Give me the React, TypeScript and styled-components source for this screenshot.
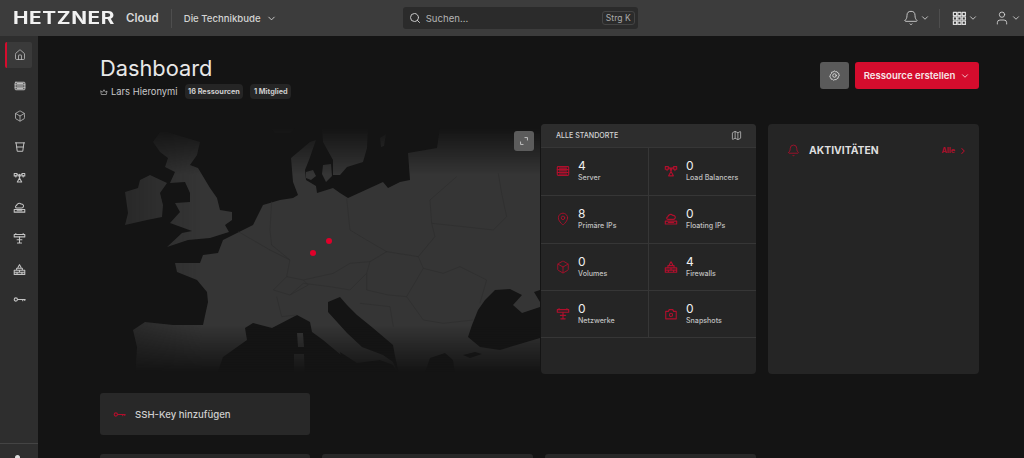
import * as React from "react";
import styled, { createGlobalStyle } from "styled-components";
import {
  Bell,
  Box,
  ChevronDown,
  ChevronRight,
  House,
  MapPin,
  Search,
  User,
  Map as MapIcon,
} from "lucide-react";

const Global = createGlobalStyle`
  html, body {
    margin: 0;
    height: 100%;
    background: #141414;
    overflow: hidden;
    font-family: Inter, "Liberation Sans", sans-serif;
  }
  * { box-sizing: border-box; }
`;

const Page = styled.div`
  width: 1024px;
  height: 458px;
  overflow: hidden;
  display: flex;
  flex-direction: column;
  color: #e6e6e6;
`;

const TopBar = styled.header`
  height: 36px;
  flex: none;
  display: flex;
  align-items: center;
  background: #3c3c3c;
  padding-left: 13px;
`;

const Logo = styled.span`
  width: 105px;
  font-size: 17px;
  font-weight: 700;
  letter-spacing: 0.5px;
  color: #f2f2f2;
  white-space: nowrap;
  transform: scaleX(1.22);
  transform-origin: left center;
`;

const LogoSub = styled.span`
  margin-left: 8px;
  font-size: 11.5px;
  font-weight: 600;
  color: #d8d8d8;
`;

const VLine = styled.div<{ $left?: number; $right?: number }>`
  width: 1px;
  height: 19px;
  background: #4e4e4e;
  margin-left: ${(p) => p.$left ?? 0}px;
  margin-right: ${(p) => p.$right ?? 0}px;
`;

const ProjectSwitch = styled.div`
  display: flex;
  align-items: center;
  gap: 5px;
  margin-left: 12px;
  margin-right: 123px;
  width: 96px;
  font-size: 9.6px;
  font-weight: 500;
  color: #d4d4d4;
  white-space: nowrap;
  svg { flex: none; }
`;

const SearchBox = styled.div`
  width: 235px;
  height: 22px;
  display: flex;
  align-items: center;
  padding: 0 3px 0 6px;
  background: #2b2b2b;
  border-radius: 3px;
  font-size: 9.6px;
  color: #b4b4b4;
  svg { margin-right: 5px; color: #c8c8c8; }
`;

const Keys = styled.kbd`
  margin-left: auto;
  font-family: inherit;
  font-size: 8.6px;
  color: #aaa;
  padding: 1px 3px;
  border: 1px solid #444;
  border-radius: 3px;
`;

const TopActions = styled.div`
  margin-left: auto;
  display: flex;
  align-items: center;
  padding-right: 3px;
`;

const TopAction = styled.div<{ $gap: number }>`
  display: flex;
  align-items: center;
  gap: 1px;
  margin-right: ${(p) => p.$gap}px;
  color: #dcdcdc;
`;

const Body = styled.div`
  flex: 1;
  display: flex;
  min-height: 0;
`;

const SideBar = styled.nav`
  width: 38px;
  flex: none;
  background: #2e2e2e;
  display: flex;
  flex-direction: column;
  gap: 4.6px;
  padding: 6px 6px 0 5px;
`;

const SideItem = styled.div<{ $active?: boolean }>`
  height: 26px;
  display: flex;
  align-items: center;
  justify-content: center;
  color: #c4c4c4;
  background: ${(p) => (p.$active ? "#3a3a3a" : "transparent")};
  border-left: 2px solid ${(p) => (p.$active ? "#d50c2d" : "transparent")};
  border-radius: 2px;
`;

const SideFoot = styled.div`
  margin: auto -6px 0 -5px;
  height: 15px;
  border-top: 1px solid #444;
  display: flex;
  justify-content: center;
  padding-top: 11px;
  &::after {
    content: "";
    width: 5px;
    height: 5px;
    border-radius: 50%;
    background: #ddd;
    margin-left: -4px;
  }
`;

const Main = styled.main`
  flex: 1;
  min-width: 0;
  padding: 19px 45px 0 62px;
`;

const TitleRow = styled.div`
  display: flex;
  justify-content: space-between;
  align-items: flex-start;
  height: 69px;
`;

const Title = styled.h1`
  margin: 0;
  font-size: 21.8px;
  line-height: 26px;
  font-weight: 400;
  color: #e8e8e8;
`;

const Owner = styled.div`
  display: flex;
  align-items: center;
  margin-top: 3px;
  font-size: 9.4px;
  color: #c8c8c8;
  svg { margin-right: 3px; }
`;

const Badge = styled.span`
  margin-left: 7px;
  padding: 0 3.5px;
  height: 15px;
  line-height: 15px;
  font-size: 7.3px;
  font-weight: 700;
  color: #cccccc;
  background: #252525;
  border-radius: 4px;
  white-space: nowrap;
`;

const Actions = styled.div`
  display: flex;
  gap: 6px;
  margin-top: 7px;
`;

const GearButton = styled.button`
  width: 29px;
  height: 27px;
  border: 0;
  padding: 0;
  display: flex;
  align-items: center;
  justify-content: center;
  background: #5a5a5a;
  border-radius: 3px;
  color: #dcdcdc;
`;

const CreateButton = styled.button`
  width: 124px;
  height: 27px;
  border: 0;
  display: flex;
  align-items: center;
  justify-content: center;
  gap: 5px;
  background: #d50c2d;
  border-radius: 3px;
  color: #f6e6e8;
  font-family: inherit;
  font-size: 9.6px;
  font-weight: 600;
  white-space: nowrap;
`;

const Overview = styled.section`
  display: grid;
  grid-template-columns: 441px 215px 223px;
  grid-template-rows: 250px;
`;

const MapArea = styled.div`
  position: relative;
  margin-top: -4px;
  height: 260px;
  margin-left: -10px;
  width: 451px;
`;

const fade = `linear-gradient(to bottom, transparent 3%, #000 21%, #000 79%, transparent 97%),
    linear-gradient(to right, rgba(0, 0, 0, 0.6) 6%, #000 25%)`;

const MapSvg = styled.svg`
  display: block;
  width: 450px;
  height: 260px;
  -webkit-mask-image: ${fade};
  mask-image: ${fade};
  -webkit-mask-composite: source-in;
  mask-composite: intersect;
`;

const Pin = styled.span<{ $x: number; $y: number }>`
  position: absolute;
  left: ${(p) => p.$x - 3}px;
  top: ${(p) => p.$y - 3}px;
  width: 6px;
  height: 6px;
  border-radius: 50%;
  background: #e0002a;
`;

const Expand = styled.button`
  position: absolute;
  top: 11px;
  left: 424px;
  width: 20px;
  height: 20px;
  border: 0;
  padding: 0;
  display: flex;
  align-items: center;
  justify-content: center;
  background: #5c5c5c;
  border-radius: 3px;
  color: #d8d8d8;
`;

const StatsPanel = styled.div`
  background: #252525;
  border-radius: 4px;
  overflow: hidden;
`;

const StatsHead = styled.div`
  height: 23px;
  display: flex;
  align-items: center;
  justify-content: space-between;
  padding: 0 14px 0 15px;
  background: #2d2d2d;
  font-size: 7.1px;
  font-weight: 500;
  color: #d4d4d4;
`;

const StatsGrid = styled.div`
  display: grid;
  grid-template-columns: 108px 107px;
  grid-auto-rows: 47.75px;
`;

const Stat = styled.div<{ $left: boolean }>`
  display: flex;
  align-items: center;
  padding-left: 15px;
  border-top: 1px solid #363636;
  border-right: ${(p) => (p.$left ? "1px solid #363636" : "0")};
  &:nth-last-child(-n + 2) {
    border-bottom: 1px solid #363636;
  }
`;

const StatIcon = styled.div`
  width: 22px;
  flex: none;
  display: flex;
  color: #b00f2c;
`;

const StatNum = styled.div`
  font-size: 12px;
  line-height: 14px;
  font-weight: 400;
  color: #f0f0f0;
`;

const StatLabel = styled.div`
  font-size: 7.1px;
  line-height: 10px;
  font-weight: 500;
  color: #c0c0c0;
`;

const ActivityPanel = styled.div`
  margin-left: 12px;
  background: #252525;
  border-radius: 4px;
  height: 250px;
  padding: 20px 11px 0 19px;
`;

const ActivityHead = styled.div`
  display: flex;
  align-items: center;
  color: #b00f2c;
  svg { flex: none; }
`;

const ActivityTitle = styled.span`
  margin-left: 9px;
  font-size: 10.4px;
  font-weight: 700;
  color: #dedede;
`;

const AllLink = styled.span`
  margin-left: auto;
  display: flex;
  align-items: center;
  gap: 3px;
  font-size: 7.2px;
  font-weight: 700;
`;

const SshCard = styled.div`
  margin-top: 19px;
  width: 210px;
  height: 42px;
  display: flex;
  align-items: center;
  gap: 9px;
  padding-left: 13px;
  background: #282828;
  border-radius: 3px;
  font-size: 9.6px;
  font-weight: 500;
  color: #cfcfcf;
  svg { color: #b00f2c; }
`;

const BottomRow = styled.div`
  margin-top: 19px;
  display: grid;
  grid-template-columns: 210px 211px 211px;
  gap: 12px;
`;

const BottomCard = styled.div`
  height: 40px;
  background: #282828;
  border-radius: 3px;
`;

type IconProps = { size?: number };

const Glyph = ({ size = 14, children }: IconProps & { children: React.ReactNode }) => (
  <svg
    width={size}
    height={size}
    viewBox="0 0 16 16"
    fill="none"
    stroke="currentColor"
    strokeWidth="1.3"
    strokeLinecap="round"
    strokeLinejoin="round"
  >
    {children}
  </svg>
);

const ServerGlyph = (p: IconProps) => (
  <Glyph {...p}>
    <rect x="1.5" y="3" width="13" height="10" rx="1" />
    <path d="M1.5 6.4h13M1.5 9.7h13M4 4.700h8M4 8h8M4 11.400h8" />
  </Glyph>
);

const BucketGlyph = (p: IconProps) => (
  <Glyph {...p}>
    <path d="M2 2.500h12M2.800 2.500l1.500 11.200h7.400l1.500-11.200M3.600 8h8.800" />
  </Glyph>
);

const BalancerGlyph = (p: IconProps) => (
  <Glyph {...p}>
    <rect x="1.5" y="3" width="3.5" height="3" />
    <rect x="11" y="3" width="3.5" height="3" />
    <path d="M5 4.500h1.500L8 8l1.500-3.500H11M8 4v4M5.300 13.500 8 8.500l2.700 5zM3.500 6v1.500M12.500 6v1.500" />
  </Glyph>
);

const FloatingGlyph = (p: IconProps) => (
  <Glyph {...p}>
    <path d="M4.500 8.500C2.800 8.500 2.500 6 4.300 5.600 4.800 3 8 1.800 10 3.800c2-.2 3.400 1.400 2.800 3-.2.8-1 1.700-2 1.700z" />
    <rect x="1.5" y="10.500" width="13" height="3.200" />
    <path d="M5 12h6" />
  </Glyph>
);

const NetworkGlyph = (p: IconProps) => (
  <Glyph {...p}>
    <rect x="1.5" y="3" width="13" height="3" />
    <path d="M3.500 3V1.800M12.500 3V1.800M8 6v7.500M5 9.500h6M5.500 13.500h5" />
  </Glyph>
);

const FirewallGlyph = (p: IconProps) => (
  <Glyph {...p}>
    <path d="M1.500 9h13v5h-13zM1.500 11.500h13M8 9v2.500M5 11.500V14M11 11.500V14M4.500 9V6.500h7V9M6 6.500c0-2 1-2.500 2-4.500 1 2 2 2.500 2 4.500" />
  </Glyph>
);

const KeyGlyph = (p: IconProps) => (
  <Glyph {...p}>
    <circle cx="3.5" cy="8" r="2" />
    <path d="M5.500 8h9.500M12 8v1.600M14.500 8v1.200" />
  </Glyph>
);

const SnapshotGlyph = (p: IconProps) => (
  <Glyph {...p}>
    <path d="M2 5h3l1-2h4l1 2h3v8.500H2z" />
    <circle cx="8" cy="9" r="1.8" />
  </Glyph>
);

const GridGlyph = (p: IconProps) => (
  <Glyph {...p}>
    {[1.5, 6.2, 10.9].map((x) =>
      [1.5, 6.2, 10.9].map((y) => <rect key={`${x}-${y}`} x={x} y={y} width="3.4" height="3.4" />)
    )}
  </Glyph>
);

const CrownGlyph = (p: IconProps) => (
  <Glyph {...p}>
    <path d="M2 6l3 2.400L8 3.500l3 4.900L14 6l-1.300 7H3.300z" />
  </Glyph>
);

const GearGlyph = (p: IconProps) => (
  <Glyph {...p}>
    <path d="M8 1.500l1.700 1.100 2-.1 1 1.700 1.800 1-.1 2L15 8.700l-1.600 1.200-.1 2-1.800.6-1 1.600-2-.2-1.700 1-1.500-1.300-2-.2-.6-1.900-1.600-1.200.6-1.900L2.100 6.700l1.400-1.500.3-2 2-.3z" />
    <circle cx="8" cy="8" r="2.6" />
  </Glyph>
);

const ExpandGlyph = (p: IconProps) => (
  <Glyph {...p}>
    <path d="M9.500 2.500h4v4M2.500 9.500v4h4" />
  </Glyph>
);

const stats: { label: string; value: number; icon: React.ReactNode }[] = [
  { label: "Server", value: 4, icon: <ServerGlyph /> },
  { label: "Load Balancers", value: 0, icon: <BalancerGlyph /> },
  { label: "Primäre IPs", value: 8, icon: <MapPin size={14} strokeWidth={1.5} /> },
  { label: "Floating IPs", value: 0, icon: <FloatingGlyph /> },
  { label: "Volumes", value: 0, icon: <Box size={14} strokeWidth={1.5} /> },
  { label: "Firewalls", value: 4, icon: <FirewallGlyph /> },
  { label: "Netzwerke", value: 0, icon: <NetworkGlyph /> },
  { label: "Snapshots", value: 0, icon: <SnapshotGlyph /> },
];

const sideIcons = [
  <House key="home" size={12} strokeWidth={1.5} />,
  <ServerGlyph key="server" size={12} />,
  <Box key="box" size={12} strokeWidth={1.5} />,
  <BucketGlyph key="bucket" size={12} />,
  <BalancerGlyph key="lb" size={13} />,
  <FloatingGlyph key="fip" size={13} />,
  <NetworkGlyph key="net" size={13} />,
  <FirewallGlyph key="fw" size={13} />,
  <KeyGlyph key="key" size={13} />,
];

// map shapes use page coordinates, hence the viewBox below
const land = [
  "M175 263 L200 263 L203 255 L218 253 L223 240 L253 225 L263 205 L280 200 L293 198 L298 195 L293 182 L291 158 L310 142 L316 140 L309 160 L305 170 L306 180 L316 186 L317 193 L333 188 L340 193 L348 198 L383 182 L388 188 L400 182 L410 180 L408 153 L437 148 L440 127 L540 127 L540 380 L135 380 L137 347 L133 330 L145 322 L173 325 L203 325 L208 302 L207 292 L197 280 L177 272 Z",
  // Sweden
  "M322 128 L368 128 L367 148 L363 162 L347 167 L340 175 L333 175 L333 160 L323 142 Z",
  // Norway tip, Gotland
  "M270 127 L296 127 L290 133 L275 133 Z M380 138 L386 134 L384 146 L381 147 Z",
  // Britain
  "M167 132 L200 142 L197 155 L190 165 L198 168 L210 188 L217 198 L220 210 L232 212 L232 220 L225 225 L229 232 L210 238 L188 240 L167 247 L182 233 L192 231 L170 223 L180 212 L175 203 L190 202 L190 193 L185 182 L170 183 L175 172 L165 167 L168 158 L160 152 L153 142 L160 132 Z",
  // Ireland
  "M138 188 L140 180 L150 175 L167 183 L160 193 L163 205 L162 217 L147 220 L125 225 L128 213 L125 192 Z",
  // Funen, Zealand
  "M306 172 L313 170 L316 176 L311 180 L306 178 Z M323 165 L331 164 L332 176 L326 182 L322 174 Z",
];

const seas = [
  // Adriatic
  "M328 302 L340 297 L347 305 L357 315 L373 328 L393 345 L395 356 L400 378 L393 362 L383 355 L362 347 L347 333 L328 312 Z",
  // Ligurian and Tyrrhenian
  "M215 380 L223 357 L247 340 L245 328 L253 323 L272 328 L297 315 L310 322 L312 332 L323 340 L347 360 L370 380 Z",
  "M340 352 L357 363 L380 360 L393 365 L402 380 L345 380 Z",
  // Aegean
  "M423 378 L430 358 L445 353 L453 360 L456 380 L423 380 Z M463 355 L475 352 L482 354 L470 358 Z",
  // Black Sea
  "M478 310 L485 300 L495 290 L510 289 L522 295 L513 305 L522 313 L540 307 L540 338 L500 350 L480 347 L468 337 L472 325 Z M534 292 L540 290 L540 302 Z",
];

const islands = ["M297 333 L303 333 L304 347 L298 347 Z", "M294 354 L304 354 L305 380 L294 380 Z"];

const borders = [
  "M545 245 L540 330 L545 375 L600 420 L590 470",
  "M445 335 L540 390 L600 420",
  "M770 235 L780 330 L830 360 L890 395 L840 425 L780 430 L730 460 L640 480 L590 470 L550 510 L600 525 L655 495 L640 480",
  "M560 530 L575 590 L620 585",
  "M600 525 L640 490 L720 500 L780 510 L830 460 L840 425",
  "M890 395 L985 410 L1035 350 L1025 310 L1020 240 L1100 170",
  "M1025 310 L1120 320 L1210 330 L1250 290 L1235 220 L1225 160",
  "M985 410 L1000 445 L1060 460 L1110 440 L1190 480 L1170 550",
  "M1000 445 L950 530 L1000 600 L1060 610 L1150 600",
  "M830 460 L830 510 L895 525 L950 530",
  "M810 550 L900 560 L910 620",
];

const EuropeMap = () => (
  <MapSvg viewBox="90 120 450 260">
    {land.map((d, i) => (
      <path key={i} d={d} fill="#353535" />
    ))}
    {seas.map((d, i) => (
      <path key={i} d={d} fill="#141414" />
    ))}
    {islands.map((d, i) => (
      <path key={i} d={d} fill="#353535" />
    ))}
    <g transform="translate(90 120) scale(0.3333)">
      {borders.map((d, i) => (
        <path key={i} d={d} fill="none" stroke="#2e2e2e" strokeWidth="2" />
      ))}
    </g>
  </MapSvg>
);

export default function App() {
  return (
    <Page>
      <Global />
      <TopBar>
        <Logo>HETZNER</Logo>
        <LogoSub>Cloud</LogoSub>
        <VLine $left={12} />
        <ProjectSwitch>
          Die Technikbude
          <ChevronDown size={11} />
        </ProjectSwitch>
        <SearchBox>
          <Search size={12} />
          Suchen...
          <Keys>Strg K</Keys>
        </SearchBox>
        <TopActions>
          <TopAction $gap={9}>
            <Bell size={16} strokeWidth={1.25} />
            <ChevronDown size={10} />
          </TopAction>
          <VLine $right={12} />
          <TopAction $gap={16}>
            <GridGlyph size={15} />
            <ChevronDown size={10} />
          </TopAction>
          <TopAction $gap={0}>
            <User size={16} strokeWidth={1.25} />
            <ChevronDown size={10} />
          </TopAction>
        </TopActions>
      </TopBar>
      <Body>
        <SideBar>
          {sideIcons.map((icon, i) => (
            <SideItem key={i} $active={i === 0}>
              {icon}
            </SideItem>
          ))}
          <SideFoot />
        </SideBar>
        <Main>
          <TitleRow>
            <div>
              <Title>Dashboard</Title>
              <Owner>
                <CrownGlyph size={8} />
                Lars Hieronymi
                <Badge>16 Ressourcen</Badge>
                <Badge>1 Mitglied</Badge>
              </Owner>
            </div>
            <Actions>
              <GearButton aria-label="Einstellungen">
                <GearGlyph size={11} />
              </GearButton>
              <CreateButton>
                Ressource erstellen
                <ChevronDown size={10} />
              </CreateButton>
            </Actions>
          </TitleRow>
          <Overview>
            <MapArea>
              <EuropeMap />
              <Pin $x={238.7} $y={120.7} />
              <Pin $x={222.7} $y={132.7} />
              <Expand aria-label="Karte vergrößern">
                <ExpandGlyph size={10} />
              </Expand>
            </MapArea>
            <StatsPanel>
              <StatsHead>
                ALLE STANDORTE
                <MapIcon size={11} strokeWidth={1.5} />
              </StatsHead>
              <StatsGrid>
                {stats.map((s, i) => (
                  <Stat key={s.label} $left={i % 2 === 0}>
                    <StatIcon>{s.icon}</StatIcon>
                    <div>
                      <StatNum>{s.value}</StatNum>
                      <StatLabel>{s.label}</StatLabel>
                    </div>
                  </Stat>
                ))}
              </StatsGrid>
            </StatsPanel>
            <ActivityPanel>
              <ActivityHead>
                <Bell size={13} strokeWidth={1.5} />
                <ActivityTitle>AKTIVITÄTEN</ActivityTitle>
                <AllLink>
                  Alle
                  <ChevronRight size={10} strokeWidth={2.5} />
                </AllLink>
              </ActivityHead>
            </ActivityPanel>
          </Overview>
          <SshCard>
            <KeyGlyph size={13} />
            SSH-Key hinzufügen
          </SshCard>
          <BottomRow>
            <BottomCard />
            <BottomCard />
            <BottomCard />
          </BottomRow>
        </Main>
      </Body>
    </Page>
  );
}
